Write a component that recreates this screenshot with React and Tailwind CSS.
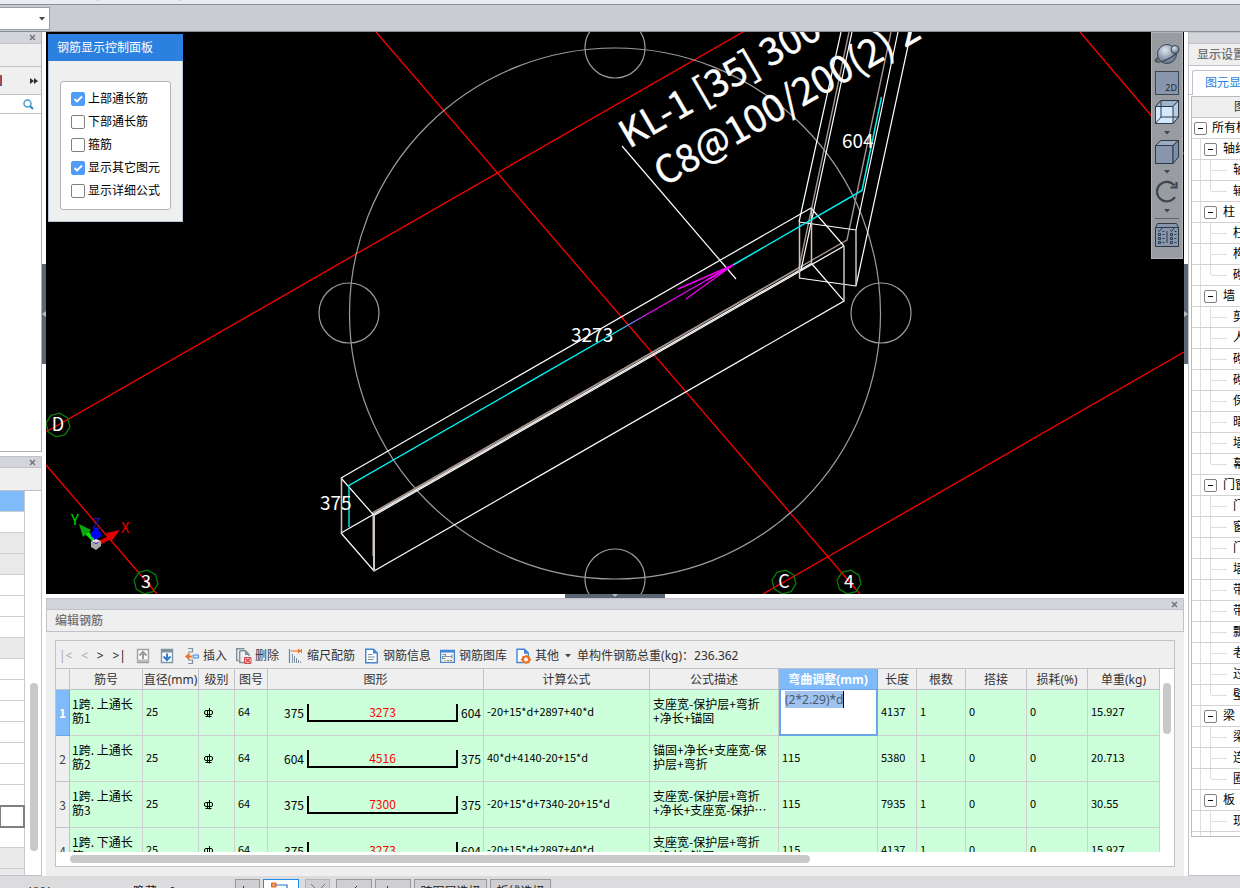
import React from "react";

const UI = "font-['Noto_Sans','Noto_Sans_CJK_SC',sans-serif]";
const CJK = "font-['Noto_Sans_CJK_SC',sans-serif]";

/* ---------- shared bits ---------- */

function CloseButton() {
  return (
    <button type="button" aria-label="关闭" className="flex h-full w-[17px] items-center justify-center">
      <svg width="7" height="7" viewBox="0 0 7 7" stroke="#6e7177" strokeWidth="1.4">
        <path d="M1 1L6 6M6 1L1 6" />
      </svg>
    </button>
  );
}

function Caret({ className = "" }) {
  return (
    <svg className={className} width="6" height="4" viewBox="0 0 6 4">
      <path d="M0 0H6L3 3.5Z" fill="#3f4650" />
    </svg>
  );
}

/* ---------- left column ---------- */

const LEFT_ROWS = [
  "bg-[#7fbafa]",
  "bg-white",
  "bg-[#e9e9e9]",
  "bg-[#e9e9e9]",
  "bg-white",
  "bg-white",
  "bg-white",
  "bg-[#e9e9e9]",
  "bg-white",
  "bg-white",
  "bg-white",
  "bg-white",
  "bg-white",
  "bg-white",
  "bg-white",
  "relative z-10 bg-white outline-2 -outline-offset-1 outline-[#808080]",
  "bg-white",
  "bg-[#e9e9e9]",
  "bg-[#e9e9e9]",
];

function LeftColumn() {
  return (
    <aside className="flex w-[42px] shrink-0 flex-col bg-white">
      <section className="flex h-[420px] shrink-0 flex-col border-r border-b border-[#aeb0b3] bg-white">
        <div className="flex h-3 justify-end border-b border-[#bfc2c8] bg-[#d3d5da]">
          <CloseButton />
        </div>
        <div className="h-[23px] border-b border-[#bfc2c8] bg-[#efefef]" />
        <div className="flex h-7 items-center justify-between border-b border-[#bfc2c8] bg-[#efefef]">
          <svg width="2" height="11" viewBox="0 0 2 11">
            <path d="M0 0H2V10H0Z" fill="#a8484c" />
            <path d="M0 10H2V11H0Z" fill="#2b5f9e" />
          </svg>
          <button type="button" aria-label="更多" className="pr-[3px]">
            <svg width="8" height="6" viewBox="0 0 8 6" fill="#2d2d2d">
              <path d="M0 0L4 3L0 6ZM4 0L8 3L4 6Z" />
            </svg>
          </button>
        </div>
        <div className="flex h-[19px] items-center justify-end border-b border-[#bfc2c8] bg-white">
          <button type="button" aria-label="搜索" className="pr-[7px]">
            <svg width="11" height="11" viewBox="0 0 11 11" fill="none">
              <circle cx="4.5" cy="4.5" r="3.5" stroke="#4a9fd0" strokeWidth="1.5" />
              <path d="M7.2 7.2L10 10" stroke="#2f86bb" strokeWidth="2" />
            </svg>
          </button>
        </div>
      </section>
      <section className="mt-1 flex min-h-0 flex-1 flex-col border-r border-b border-[#bfc2c8] bg-white">
        <div className="flex h-3 shrink-0 justify-end border-y border-[#bfc2c8] bg-[#d3d5da]">
          <CloseButton />
        </div>
        <div className="h-[23px] shrink-0 border-b border-[#bfc2c8] bg-[#efefef]" />
        <div className="flex min-h-0 flex-1 justify-between overflow-hidden">
          <div className="flex w-[25px] flex-col border-r border-[#c9c9c9]">
            {LEFT_ROWS.map((cls, i) => (
              <div key={i} className={`h-[21px] shrink-0 border-b border-[#cfcfcf] ${cls}`} />
            ))}
          </div>
          <div className="mr-[3px] mt-[192px] h-[168px] w-2 rounded-full bg-[#c9c9c9]" />
        </div>
      </section>
    </aside>
  );
}

function SideSplitter({ dir }) {
  return (
    <div className="flex w-1 shrink-0 flex-col bg-white pt-[232px]">
      <div className="flex h-[100px] items-center justify-center bg-[#5c6672]">
        <svg width="4" height="6" viewBox="0 0 4 6">
          <path d={dir === "left" ? "M4 0V6L0 3Z" : "M0 0V6L4 3Z"} fill="#b8bdc4" />
        </svg>
      </div>
    </div>
  );
}

/* ---------- 3D viewport ---------- */

function AxisBubble({ x, y, label }) {
  const r = 12;
  const pts = Array.from({ length: 8 }, (_, i) => {
    const a = (i * Math.PI) / 4 + 0.15;
    return `${(x + r * Math.cos(a)).toFixed(1)},${(y + r * Math.sin(a)).toFixed(1)}`;
  }).join(" ");
  return (
    <g>
      <polygon points={pts} fill="none" stroke="#0b7d0b" strokeWidth="1.3" />
      <text x={x} y={y + 6} fontSize="18" textAnchor="middle" fill="#fff">
        {label}
      </text>
    </g>
  );
}

function Scene() {
  return (
    <svg
      className={`absolute inset-0 h-full w-full ${CJK}`}
      viewBox="46 32 1138 562"
      preserveAspectRatio="xMidYMid slice"
      fill="none"
    >
      <defs>
        <linearGradient id="rebar" gradientUnits="userSpaceOnUse" x1="615" y1="332" x2="650" y2="312">
          <stop offset="0" stopColor="#00f0f0" />
          <stop offset="1" stopColor="#f000f0" />
        </linearGradient>
      </defs>
      <g stroke="#ff0000" strokeWidth="1.3">
        <path d="M376 32L860 594" />
        <path d="M46 432L743 32" />
        <path d="M1080 32L1184 154" />
        <path d="M1184 352L763 594" />
        <path d="M46 465L157 594" />
      </g>
      <g stroke="#9c9c9c" strokeWidth="1.2">
        <circle cx="615" cy="313.500" r="265.500" />
        <circle cx="615" cy="48" r="30" />
        <circle cx="349" cy="313" r="30" />
        <circle cx="881" cy="313" r="30" />
        <circle cx="615" cy="579" r="30" />
      </g>
      <g stroke="#a3928b" strokeWidth="1.4">
        <path d="M849 32L799 268L373 512.500V556" />
        <path d="M891 32L847 240L373 513.500" />
      </g>
      <g stroke="#fff" strokeWidth="1.2">
        <path d="M341 478L811 208L844 246" />
        <path d="M341 478L374 515.500L844 246" />
        <path d="M341 533L374 571L844 301L812 264" />
        <path d="M341 533L812 263" />
        <path d="M799 222L856 230M856 286L799 278" />
        <path d="M799 222L841 32M856 230L898 32M856 286L911 32M801 270L852 32" />
        <path d="M622 146L736 279" />
      </g>
      <g stroke="#c9c6c4" strokeWidth="1.5">
        <path d="M341.500 478V533M811.500 208V264M844 246V301M799.500 222V278M856 230V286" />
        <path d="M374 515V571" strokeWidth="2" />
      </g>
      <path d="M881.500 97L862 190.500L733 265" stroke="#00f0f0" strokeWidth="1.5" />
      <path d="M733 265L637 320L349 485.500V527" stroke="url(#rebar)" strokeWidth="1.4" />
      <path d="M678 289L733 265L686 299" stroke="#f000f0" strokeWidth="1.4" />
      <path d="M707 280L733 265L712 277Z" stroke="#f000f0" strokeWidth="2" />
      <g fill="#fff">
        <g fontSize="38" stroke="#fff" strokeWidth="0.4">
          <text transform="translate(629 149) rotate(-30)">KL-1 [35] 300</text>
          <text transform="translate(664 187) rotate(-30)">C8@100/200(2) 2</text>
        </g>
        <g fontSize="19">
          <text x="571" y="342">3273</text>
          <text x="320" y="510">375</text>
          <text x="842" y="148">604</text>
        </g>
      </g>
      <AxisBubble x={58} y={425} label="D" />
      <AxisBubble x={146} y={582} label="3" />
      <AxisBubble x={784} y={582} label="C" />
      <AxisBubble x={849} y={582} label="4" />
      <g>
        <path d="M97 544L111 537" stroke="#e00000" strokeWidth="4" />
        <path d="M106 533L120 530L111 542Z" fill="#e00000" />
        <path d="M96 542L85 531" stroke="#0ae00a" strokeWidth="4" />
        <path d="M79 524L91 530L83 537Z" fill="#0aa80a" />
        <path d="M96 544V534" stroke="#0000ff" strokeWidth="4" />
        <path d="M96 527L101.500 534Q101 538 96 538.500Q91 538 90.500 534Z" fill="#0000ff" />
        <path d="M91 541L96 544L101 541V546L96 550L91 547Z" fill="#a8a8a8" />
        <path d="M91 541L96 543L101 541L96 539Z" fill="#dcdcdc" />
        <g fontSize="15">
          <text x="71" y="525" fill="#00e000">Y</text>
          <text x="92" y="529" fill="#1414b4">Z</text>
          <text x="121" y="533" fill="#e00000">X</text>
        </g>
      </g>
    </svg>
  );
}

const CHECKS = [
  ["上部通长筋", true],
  ["下部通长筋", false],
  ["箍筋", false],
  ["显示其它图元", true],
  ["显示详细公式", false],
];

function RebarPanel() {
  return (
    <section className="absolute left-[2px] top-[2px] w-[135px] border border-[#b9c4d4] bg-[#efefef]">
      <h2 className="-mx-px -mt-px flex h-[27px] items-center bg-[#2b80e0] px-[9px] text-[12px] text-white">
        钢筋显示控制面板
      </h2>
      <div className="mx-[11px] mt-5 mb-[11px] flex flex-col rounded-[3px] border border-[#b4b4b4] bg-white pt-[5px] pb-[7px] pl-[10px]">
        {CHECKS.map(([label, on]) => (
          <label key={label} className="flex h-[23px] items-center gap-[3px] text-[12px] whitespace-nowrap text-black">
            <span className="relative flex h-[14px] w-[14px] shrink-0">
              <input
                type="checkbox"
                defaultChecked={on}
                className="peer h-[14px] w-[14px] appearance-none rounded-[2px] border border-[#808080] bg-white checked:border-[#4f9cf9] checked:bg-[#4f9cf9]"
              />
              <svg
                className="pointer-events-none absolute inset-0 hidden peer-checked:block"
                width="14"
                height="14"
                viewBox="0 0 14 14"
                fill="none"
              >
                <path d="M3.500 7L6 9.500L11 4.500" stroke="#fff" strokeWidth="1.900" />
              </svg>
            </span>
            {label}
          </label>
        ))}
      </div>
    </section>
  );
}

function ViewTools() {
  return (
    <div className="absolute top-0 right-px flex w-8 flex-col items-center border border-[#b2b4b7] bg-[#989b9f] pt-[9px] pb-[11px]">
      <button type="button" aria-label="动态观察" className="mb-[5px]">
        <svg width="26" height="24" viewBox="0 0 26 24" fill="none">
          <defs>
            <radialGradient id="globe" cx="0.4" cy="0.3" r="0.8">
              <stop offset="0" stopColor="#dfe7ef" />
              <stop offset="0.55" stopColor="#8d9cb0" />
              <stop offset="1" stopColor="#59687c" />
            </radialGradient>
          </defs>
          <circle cx="13" cy="12" r="9.500" fill="url(#globe)" stroke="#3b4654" />
          <path d="M4 15.500C0 18 1 20 4 20C10 20 22 14 24.500 8" stroke="#3b4654" strokeWidth="1.400" />
          <path d="M3.500 16.500L5 17.500L3.500 20L1.500 19Z" fill="#59687c" />
          <circle cx="21" cy="7.500" r="4" fill="url(#globe)" stroke="#3b4654" />
        </svg>
      </button>
      <button
        type="button"
        className="mb-[5px] flex h-6 w-6 items-end justify-end border border-[#3b4654] bg-[#8796ac] pr-px text-[9px] leading-[12px] text-[#1f2833]"
      >
        2D
      </button>
      <button type="button" aria-label="线框视图">
        <svg width="24" height="25" viewBox="0 0 24 25" stroke="#2f3a48">
          <path d="M0.500 6.500L6 0.500H23.500V17L18 23.500H0.500Z" fill="#d3e8fd" />
          <path d="M0.500 6.500L6 0.500H23.500L18 6.500Z" fill="#9fb3cb" />
          <path d="M18 6.500V23.500L23.500 17V0.500Z" fill="#b9cce0" />
          <path d="M0.500 6.500H18M6 0.500V17H23.500M6 17L0.500 23.500" fill="none" />
        </svg>
      </button>
      <Caret className="mt-[6px] mb-[5px]" />
      <button type="button" aria-label="实体视图">
        <svg width="24" height="24" viewBox="0 0 24 24" stroke="#2f3a48">
          <path d="M0.500 5.500L6 0.500H23.500L18 5.500Z" fill="#9dabbf" />
          <path d="M0.500 5.500H18V23.500H0.500Z" fill="#8796ac" />
          <path d="M18 5.500L23.500 0.500V17L18 23.500Z" fill="#7e8da3" />
        </svg>
      </button>
      <Caret className="mt-[6px] mb-[6px]" />
      <button type="button" aria-label="旋转">
        <svg width="24" height="23" viewBox="0 0 24 23" fill="none" stroke="#3b4654" strokeWidth="2.200">
          <path d="M19.500 5.500A9.800 9.800 0 1 0 20 17" />
          <path d="M21.500 2V7.500H15.500" />
        </svg>
      </button>
      <Caret className="mt-[6px] mb-[5px]" />
      <div className="mb-1 h-px w-6 bg-[#5d646d]" />
      <button type="button" aria-label="显示列表">
        <svg width="24" height="24" viewBox="0 0 24 24" fill="none" stroke="#2f3a48">
          <path d="M0.500 4.500L2.500 0.500H21.500L23.500 4.500V23.500H0.500Z" fill="#8796ac" />
          <path d="M0.500 4.500H23.500" />
          <path d="M12 8V20M3 7L4.500 8.500L7 5M15 7L16.500 8.500L19 5" />
          <path d="M3.500 10.500H5.500V12.500H3.500ZM3.500 14.500H5.500V16.500H3.500ZM3.500 18.500H5.500V20.500H3.500ZM15.500 10.500H17.500V12.500H15.500ZM15.500 14.500H17.500V16.500H15.500ZM15.500 18.500H17.500V20.500H15.500Z" />
          <path d="M7.500 8.500H9.500M7.500 11.500H9.500M7.500 15.500H9.500M7.500 19.500H9.500M19.500 8.500H21.500M19.500 11.500H21.500M19.500 15.500H21.500M19.500 19.500H21.500" />
        </svg>
      </button>
    </div>
  );
}

/* ---------- rebar editing dock ---------- */

const ICONS = {
  up: (
    <>
      <path d="M2.500 1.500H13.500V14.500H2.500Z" fill="#fafafa" stroke="#a0a0a0" strokeWidth="1.400" />
      <path d="M2 11.500H14V14H2Z" fill="#b8b8b8" />
      <path d="M8 11V5M4.500 7.500L8 4L11.500 7.500" fill="none" stroke="#9a9a9a" strokeWidth="2" />
    </>
  ),
  down: (
    <>
      <path d="M2.500 1.500H13.500V14.500H2.500Z" fill="#fff" stroke="#7f95a8" strokeWidth="1.400" />
      <path d="M2 1.500H14V4.500H2Z" fill="#7f919f" />
      <path d="M8 5.500V12M4.500 8.500L8 12L11.500 8.500" fill="none" stroke="#2e7cd6" strokeWidth="2" />
    </>
  ),
  insert: (
    <>
      <path d="M4 0.500H8.500V4H4M4 15.500H8.500V12H4" fill="none" stroke="#7f919f" strokeWidth="1.200" />
      <path d="M9 7H14.500V10H9Z" fill="#cfe3fa" stroke="#4a86cf" />
      <path d="M8 8.500H3" stroke="#ee7326" strokeWidth="1.800" />
      <path d="M5.500 4.500L1 8.500L5.500 12.500Z" fill="#ee7326" />
    </>
  ),
  remove: (
    <>
      <path d="M8.500 0.700H0.700V12.500H2.500" fill="none" stroke="#7f919f" strokeWidth="1.400" />
      <path d="M3.700 2.700H9.500L13 6.500V8M3.700 2.700V14.500H8" fill="none" stroke="#7f919f" strokeWidth="1.400" />
      <path d="M9 2.500L13.500 7H9Z" fill="#7f919f" />
      <path d="M8.500 9.500H15V15.500H8.500Z" fill="#fbe3e3" stroke="#d24949" />
      <path d="M9.500 10.500L14 14.500M14 10.500L9.500 14.500" stroke="#d24949" strokeWidth="1.600" />
    </>
  ),
  scale: (
    <>
      <path d="M1.500 1V15" stroke="#4a86cf" strokeWidth="1.200" />
      <path d="M3 3H11" stroke="#ee7326" strokeWidth="1.200" />
      <path d="M10 0.500L13.500 3L10 5.500Z" fill="#ee7326" />
      <path d="M4.500 6V15M6.500 8V15M8.500 10V15M10.500 12V15M12.500 13.500V15M13.500 1V5" stroke="#7f919f" />
    </>
  ),
  info: (
    <>
      <path d="M1.700 1.200H9.500L13.300 5V14.800H1.700Z" fill="#fff" stroke="#3f86d6" strokeWidth="1.400" />
      <path d="M9 1L13.500 5.500H9Z" fill="#3f86d6" />
      <path d="M4 6.500H8.500M4 9H11M4 11.500H9.500" stroke="#7f919f" strokeWidth="1.200" />
    </>
  ),
  library: (
    <>
      <path d="M0.600 2.500H14.400V14.400H0.600Z" fill="#f4f4f4" stroke="#4a86cf" strokeWidth="1.300" />
      <path d="M0.500 2H14.500V4.500H0.500Z" fill="#3f86d6" />
      <path d="M2.500 6.500H5.500V8.500H2.500V10.500H5.500M5.500 8.500H12V6.500M12 8.500V10.500" fill="none" stroke="#7f919f" strokeWidth="1.100" />
      <path d="M4 12.500H6" stroke="#eec12b" strokeWidth="1.200" />
      <path d="M7 12.500H9" stroke="#55b04e" strokeWidth="1.200" />
      <path d="M10 12.500H12" stroke="#e25050" strokeWidth="1.200" />
    </>
  ),
  other: (
    <>
      <path d="M1 1.200H8.500L12.300 5V14.500H1Z" fill="#fff" stroke="#3f86d6" strokeWidth="1.400" />
      <path d="M8 1L13 5.800H8Z" fill="#3f86d6" />
      <path
        d="M10 6.500L11.500 8L13.500 8L14 10L15.500 11.500L14 13L13.500 15L11.500 15L10 16L8.500 15L6.500 15L6 13L4.500 11.500L6 10L6.500 8L8.500 8Z"
        fill="#ee7326"
      />
      <circle cx="10" cy="11.500" r="2" fill="#fff" />
    </>
  ),
};

function Icon({ name }) {
  return (
    <svg className="shrink-0" width="16" height="16" viewBox="0 0 16 16">
      {ICONS[name]}
    </svg>
  );
}

function Tool({ icon, children }) {
  return (
    <button type="button" className="flex items-center gap-[3px] whitespace-nowrap">
      <Icon name={icon} />
      {children}
    </button>
  );
}

function DockToolbar() {
  return (
    <div className="flex h-7 shrink-0 items-center gap-[9px] border-b border-[#bfc2c8] bg-[#efefef] pt-[2px] pl-[3px] text-[12px] text-[#333]">
      <div className="flex w-[67px] justify-between">
        <button type="button" aria-label="第一条" className="text-[#a8a8a8]">|&lt;</button>
        <button type="button" aria-label="上一条" className="text-[#a8a8a8]">&lt;</button>
        <button type="button" aria-label="下一条" className="text-[#222]">&gt;</button>
        <button type="button" aria-label="最后一条" className="text-[#222]">&gt;|</button>
      </div>
      <div className="flex gap-2">
        <button type="button" aria-label="上移"><Icon name="up" /></button>
        <button type="button" aria-label="下移"><Icon name="down" /></button>
      </div>
      <Tool icon="insert">插入</Tool>
      <Tool icon="remove">删除</Tool>
      <Tool icon="scale">缩尺配筋</Tool>
      <Tool icon="info">钢筋信息</Tool>
      <Tool icon="library">钢筋图库</Tool>
      <div className="flex items-center gap-[6px]">
        <Tool icon="other">其他</Tool>
        <Caret />
        <span className="whitespace-nowrap">单构件钢筋总重(kg)：236.362</span>
      </div>
    </div>
  );
}

const HEADERS = [
  "筋号", "直径(mm)", "级别", "图号", "图形", "计算公式", "公式描述",
  "弯曲调整(mm)", "长度", "根数", "搭接", "损耗(%)", "单重(kg)",
];

const ROWS = [
  { no: ["1跨. 上通长", "筋1"], l: 375, m: 3273, r: 604, f: "-20+15*d+2897+40*d", d: ["支座宽-保护层+弯折", "+净长+锚固"], adj: "(2*2.29)*d", len: 4137, w: "15.927" },
  { no: ["1跨. 上通长", "筋2"], l: 604, m: 4516, r: 375, f: "40*d+4140-20+15*d", d: ["锚固+净长+支座宽-保", "护层+弯折"], adj: "115", len: 5380, w: "20.713" },
  { no: ["1跨. 上通长", "筋3"], l: 375, m: 7300, r: 375, f: "-20+15*d+7340-20+15*d", d: ["支座宽-保护层+弯折", "+净长+支座宽-保护…"], adj: "115", len: 7935, w: "30.55" },
  { no: ["1跨. 下通长", "筋1"], l: 375, m: 3273, r: 604, f: "-20+15*d+2897+40*d", d: ["支座宽-保护层+弯折", "+净长+锚固"], adj: "115", len: 4137, w: "15.927" },
];

function GradeMark() {
  return (
    <svg role="img" aria-label="HRB400" width="10" height="10" viewBox="0 0 10 10" fill="none" stroke="#000">
      <rect x="0.500" y="2.500" width="8" height="4" rx="1.500" />
      <path d="M3.500 2V9M5.500 0V9.500M1.500 8.500H7.500" />
    </svg>
  );
}

function Td({ children, pad = "px-[3px] pb-1" }) {
  return (
    <td className={`h-[46px] border-r border-b border-[#cfcfcf] bg-[#ccffda] text-left align-middle text-[11px] leading-[14px] whitespace-nowrap ${pad}`}>
      {children}
    </td>
  );
}

function TwoLines({ lines }) {
  return (
    <div className="text-[12px]">
      {lines.map((line) => (
        <div key={line} className="h-[14px]">{line}</div>
      ))}
    </div>
  );
}

function RebarTable() {
  return (
    <table className="w-full table-fixed border-separate border-spacing-0 text-black">
      <colgroup>
        <col className="w-[14px]" />
        <col className="w-[73px]" />
        <col className="w-[56px]" />
        <col className="w-[36px]" />
        <col className="w-[33px]" />
        <col className="w-[216px]" />
        <col className="w-[166px]" />
        <col className="w-[129px]" />
        <col className="w-[99px]" />
        <col className="w-[39px]" />
        <col className="w-[49px]" />
        <col className="w-[61px]" />
        <col className="w-[61px]" />
        <col className="w-[72px]" />
      </colgroup>
      <thead>
        <tr>
          <th className="h-[21px] border-r border-b border-[#bfc2c8] bg-[#efefef] p-0" />
          {HEADERS.map((h) => (
            <th
              key={h}
              className={`h-[21px] border-r border-b px-0 pt-[2px] pb-0 text-center text-[12px] leading-[18px] whitespace-nowrap ${
                h === "弯曲调整(mm)"
                  ? "border-[#6aa5e8] bg-[#7fbafa] font-bold text-white"
                  : "border-[#bfc2c8] bg-[#efefef] font-normal text-[#333]"
              }`}
            >
              {h}
            </th>
          ))}
        </tr>
      </thead>
      <tbody className={CJK}>
        {ROWS.map((r, i) => (
          <tr key={i}>
            <th
              className={`h-[46px] border-r border-b p-0 text-center align-middle text-[12px] ${
                i === 0
                  ? "border-[#6aa5e8] bg-[#7fbafa] font-bold text-white"
                  : "border-[#bfc2c8] bg-[#efefef] font-normal text-[#444]"
              }`}
            >
              {i + 1}
            </th>
            <Td pad="pr-0 pb-[3px] pl-[2px]"><TwoLines lines={r.no} /></Td>
            <Td>25</Td>
            <Td pad="pl-[5px]"><GradeMark /></Td>
            <Td>64</Td>
            <Td pad="p-0">
              <div className="flex items-center gap-[3px] text-[12px]">
                <span className="w-9 shrink-0 text-right">{r.l}</span>
                <span className="flex h-[18px] flex-1 items-center justify-center border-x-2 border-b-2 border-black text-[#f00]">
                  {r.m}
                </span>
                <span className="w-[22px] shrink-0">{r.r}</span>
              </div>
            </Td>
            <Td>{r.f}</Td>
            <Td pad="pr-0 pb-[3px] pl-[3px]"><TwoLines lines={r.d} /></Td>
            {i === 0 ? (
              <td className={`h-[46px] border-2 border-t-0 border-[#6aa5e8] bg-white p-0 align-top ${UI}`}>
                <input
                  aria-label="弯曲调整(mm)"
                  defaultValue={r.adj}
                  className="mt-px ml-1 block field-sizing-content h-[17px] border-r border-black bg-[#9fc2ee] p-0 text-[12px] leading-4 text-[#4a5a70]"
                />
              </td>
            ) : (
              <Td>{r.adj}</Td>
            )}
            <Td>{r.len}</Td>
            <Td>1</Td>
            <Td>0</Td>
            <Td>0</Td>
            <Td>{r.w}</Td>
          </tr>
        ))}
      </tbody>
    </table>
  );
}

function Dock() {
  return (
    <section className="flex min-h-0 flex-1 flex-col bg-[#efefef]">
      <div className="flex h-3 shrink-0 justify-end border border-[#bfc2c8] bg-[#d3d5da]">
        <CloseButton />
      </div>
      <h2 className="flex h-[22px] shrink-0 items-center border border-t-0 border-[#bfc2c8] pl-2 text-[12px] font-medium text-[#707070]">
        编辑钢筋
      </h2>
      <div className="mx-[9px] mt-2 mb-[9px] flex min-h-0 flex-1 flex-col border border-[#bfc2c8] bg-white">
        <DockToolbar />
        <div className="flex min-h-0 flex-1">
          <div className="min-w-0 flex-1 overflow-hidden">
            <RebarTable />
          </div>
          <div className="w-[14px] shrink-0 pt-[14px] pl-[3px]">
            <div className="h-[51px] w-2 rounded-full bg-[#c9c9c9]" />
          </div>
        </div>
        <div className="flex h-[14px] shrink-0 items-center pl-[14px]">
          <div className="h-2 w-[67%] rounded-full bg-[#c9c9c9]" />
        </div>
      </div>
    </section>
  );
}

/* ---------- right column ---------- */

const TREE = [
  [0, "所有构件"],
  [1, "轴线"], [2, "轴网"], [2, "辅助轴线"],
  [1, "柱"], [2, "柱"], [2, "构造柱"], [2, "砌体柱"],
  [1, "墙"], [2, "剪力墙"], [2, "人防门框墙"], [2, "砌体墙"], [2, "砌体加筋"], [2, "保温墙"], [2, "暗梁"], [2, "墙垛"], [2, "幕墙"],
  [1, "门窗洞"], [2, "门"], [2, "窗"], [2, "门联窗"], [2, "墙洞"], [2, "带形窗"], [2, "带形洞"], [2, "飘窗"], [2, "老虎窗"], [2, "过梁"], [2, "壁龛"],
  [1, "梁"], [2, "梁"], [2, "连梁"], [2, "圈梁"],
  [1, "板"], [2, "现浇板"],
];

function Minus() {
  return (
    <button type="button" aria-label="折叠" className="flex h-[13px] w-[13px] shrink-0 items-center justify-center rounded-[2px] border border-[#808080] bg-white">
      <span className="h-px w-[5px] bg-black" />
    </button>
  );
}

function TreeRow({ level, label, last }) {
  return (
    <li className="flex h-[21px] shrink-0 items-center border-b border-[#d2d2d2] whitespace-nowrap">
      {level === 0 && (
        <span className="flex items-center gap-[5px] pl-[2px]">
          <Minus />
          {label}
        </span>
      )}
      {level > 0 && <span className="ml-2 h-full w-px shrink-0 bg-[#dedede]" />}
      {level === 1 && (
        <span className="flex items-center gap-[6px] pl-[3px]">
          <Minus />
          {label}
        </span>
      )}
      {level === 2 && (
        <span className="flex h-full items-center pl-[9px]">
          <span className={`w-px bg-[#dedede] ${last ? "h-[10px] self-start" : "h-full"}`} />
          <span className="mr-[6px] h-px w-4 bg-[#dedede]" />
          {label}
        </span>
      )}
    </li>
  );
}

function RightColumn() {
  return (
    <aside className="flex w-[52px] shrink-0 flex-col overflow-hidden border-b border-l border-[#bfc2c8] bg-white text-[12px] text-black">
      <div className="h-3 shrink-0 border-y border-[#bfc2c8] bg-[#d3d5da]" />
      <h2 className="flex h-[22px] shrink-0 items-center border-b border-[#bfc2c8] bg-[#efefef] pl-2 font-medium whitespace-nowrap text-[#707070]">
        显示设置
      </h2>
      <div className="flex h-[29px] shrink-0 items-end border-[#bfc2c8]">
        <span className="h-px w-[3px] shrink-0 bg-[#bfc2c8]" />
        <button type="button" className="flex h-[25px] shrink-0 items-center rounded-tl-[3px] border-t border-l border-[#bfc2c8] px-3 whitespace-nowrap text-[#2b80e0]">
          图元显示
        </button>
      </div>
      <div className="mt-px ml-[2px] flex flex-col border-y border-l border-[#b9bbbf]">
        <div className="flex h-[21px] shrink-0 items-center border-b border-[#bfc2c8] bg-[#efefef] pl-[42px] whitespace-nowrap text-[#333]">
          图元
        </div>
        <ul className="flex flex-col">
          {TREE.map(([level, label], i) => {
            const next = TREE[i + 1];
            return <TreeRow key={i} level={level} label={label} last={level === 2 && !!next && next[0] !== 2} />;
          })}
        </ul>
        <div className="flex h-1">
          <span className="ml-2 w-px bg-[#dedede]" />
          <span className="ml-[9px] w-px bg-[#dedede]" />
        </div>
      </div>
    </aside>
  );
}

/* ---------- status bar ---------- */

function StatusButton({ className = "", children, ...rest }) {
  return (
    <button type="button" className={`flex h-6 shrink-0 items-center justify-center border pt-px whitespace-nowrap ${className}`} {...rest}>
      {children}
    </button>
  );
}

function StatusBar() {
  const grey = "border-[#97999c] bg-[#cfcfd1]";
  return (
    <footer className="flex h-3 shrink-0 items-start overflow-hidden bg-[#dcdcde] pt-[3px] text-[12px] text-[#222]">
      <span className="w-[133px] shrink-0 pl-[29px] leading-[26px]">XYY</span>
      <span className="w-[102px] shrink-0 leading-[26px]">隐藏：0</span>
      <div className="flex gap-[3px]">
        <StatusButton aria-label="正交" className={`w-[25px] ${grey}`}>
          <svg width="14" height="14" viewBox="0 0 14 14" stroke="#333" fill="none"><path d="M2.500 1V12H13" /></svg>
        </StatusButton>
        <StatusButton aria-label="捕捉" className="w-9 border-[#1a8cf0] bg-white">
          <svg className="-mt-1" width="20" height="16" viewBox="0 0 20 16" fill="none">
            <path d="M4 3H16V14" stroke="#2b70c8" strokeWidth="1.200" />
            <path d="M0.500 1H5V5H0.500Z" fill="#f0965a" stroke="#d9661e" />
          </svg>
        </StatusButton>
        <StatusButton aria-label="交点" disabled className="mx-[3px] w-[25px] border-[#b4b4b6] bg-[#cfcfd1]">
          <svg width="16" height="16" viewBox="0 0 16 16" stroke="#777"><path d="M1 0L15 14M15 0L1 14" /></svg>
        </StatusButton>
        <StatusButton aria-label="垂点" className={`w-9 ${grey}`}>
          <svg width="16" height="14" viewBox="0 0 16 14" stroke="#333" fill="none"><path d="M11 1L5 7L11 13" /></svg>
        </StatusButton>
        <StatusButton aria-label="中点" className={`w-9 ${grey}`}>
          <svg width="16" height="14" viewBox="0 0 16 14" stroke="#333" fill="none"><path d="M2.500 1V12H14" /></svg>
        </StatusButton>
        <StatusButton className={`w-[73px] ${grey}`}>跨图层选择</StatusButton>
        <StatusButton className={`w-[61px] ${grey}`}>折线选择</StatusButton>
      </div>
    </footer>
  );
}

/* ---------- page ---------- */

export default function App() {
  return (
    <div className={`flex h-screen flex-col overflow-hidden bg-white ${UI}`}>
      <div className="flex h-[5px] shrink-0 gap-[82px] border-b border-[#8a8f99] bg-[#e9edef] pl-[97px]">
        <span className="h-px w-px bg-[#b4b8bd]" />
        <span className="h-px w-px bg-[#b4b8bd]" />
      </div>
      <header className="flex h-[27px] shrink-0 items-start border-b border-[#898d94] bg-[#c9ccd1] pt-[2px]">
        <div className="relative h-[23px] w-[50px]">
          <select aria-label="楼层" className="h-full w-full appearance-none border border-l-0 border-[#9a9da3] bg-white">
            <option value="" />
          </select>
          <Caret className="pointer-events-none absolute top-[10px] right-[5px]" />
        </div>
      </header>
      <div className="flex min-h-0 flex-1">
        <LeftColumn />
        <SideSplitter dir="left" />
        <main className="flex min-w-0 flex-1 flex-col">
          <div className="relative h-[562px] shrink-0 overflow-hidden bg-black">
            <Scene />
            <RebarPanel />
            <ViewTools />
          </div>
          <div className="flex h-1 shrink-0 justify-center bg-white">
            <div className="flex w-[100px] justify-center bg-[#5c6672]">
              <svg width="6" height="4" viewBox="0 0 6 4">
                <path d="M0 0H6L3 3Z" fill="#b8bdc4" />
              </svg>
            </div>
          </div>
          <Dock />
        </main>
        <SideSplitter dir="right" />
        <RightColumn />
      </div>
      <StatusBar />
    </div>
  );
}
